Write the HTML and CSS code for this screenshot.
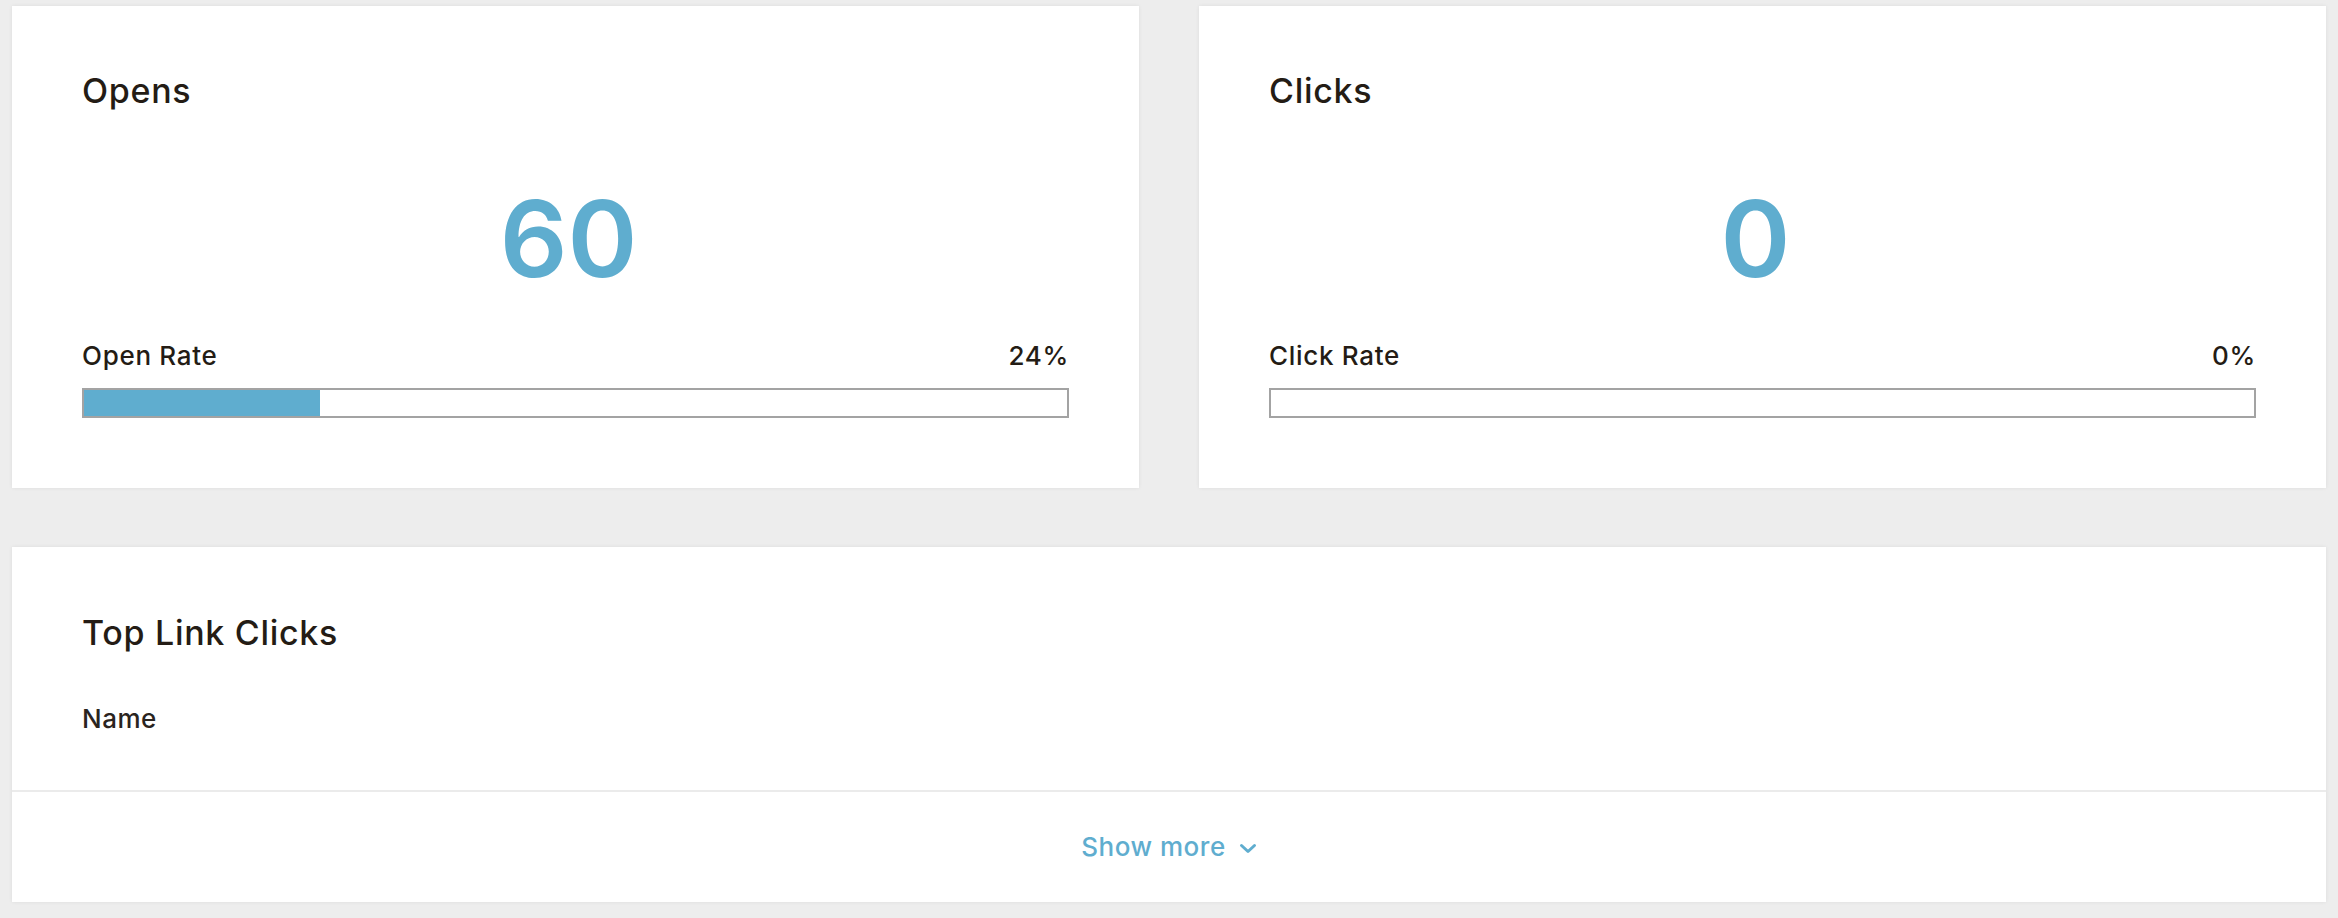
FILE: index.html
```html
<!DOCTYPE html>
<html lang="en">
<head>
<meta charset="utf-8">
<title>Report</title>
<link rel="stylesheet" href="styles.css">
</head>
<body>
<div class="page">
  <div class="stats-row">
    <section class="card stat-card">
      <h2 class="card-title">Opens</h2>
      <div class="big-number">60</div>
      <div class="rate-row">
        <span class="rate-label">Open Rate</span>
        <span class="rate-value">24%</span>
      </div>
      <div class="bar"><div class="bar-fill" style="width:24%"></div></div>
    </section>
    <section class="card stat-card">
      <h2 class="card-title">Clicks</h2>
      <div class="big-number">0</div>
      <div class="rate-row">
        <span class="rate-label">Click Rate</span>
        <span class="rate-value">0%</span>
      </div>
      <div class="bar"><div class="bar-fill" style="width:0%"></div></div>
    </section>
  </div>
  <section class="card links-card">
    <div class="links-body">
      <h2 class="card-title">Top Link Clicks</h2>
      <div class="col-head">Name</div>
    </div>
    <div class="links-footer">
      <a class="show-more" href="#">Show more
        <svg class="chev" width="18" height="11" viewBox="0 0 18 11"><path d="M2.5 2.5 L9 8.5 L15.5 2.5" fill="none" stroke="currentColor" stroke-width="3" stroke-linecap="round" stroke-linejoin="round"/></svg>
      </a>
    </div>
  </section>
</div>
</body>
</html>
```

FILE: styles.css
```css
html, body {
  margin: 0;
  padding: 0;
  background: #ededed;
}
body {
  font-family: Inter, "Open Sans", "Liberation Sans", Arial, sans-serif;
  color: #241c15;
}
.page {
  padding: 6px 12px 16px;
}
.stats-row {
  display: grid;
  grid-template-columns: 1fr 1fr;
  column-gap: 60px;
}
.card {
  background: #ffffff;
  box-shadow: 0 0 4px rgba(0, 0, 0, 0.07);
}
.stat-card {
  box-sizing: border-box;
  height: 482px;
  padding: 65px 70px 0;
  display: flex;
  flex-direction: column;
}
.card-title {
  margin: 0;
  font-size: 34px;
  line-height: 40px;
  font-weight: 500;
  letter-spacing: 0.7px;
}
.big-number {
  margin-top: 75px;
  text-align: center;
  font-size: 106px;
  line-height: 106px;
  font-weight: 600;
  color: #5fadcf;
  letter-spacing: 0;
  padding-right: 14px;
}
.rate-row {
  margin-top: 49px;
  display: flex;
  justify-content: space-between;
  font-size: 26px;
  line-height: 30px;
  font-weight: 500;
  letter-spacing: 0.7px;
}
.bar {
  margin-top: 17px;
  box-sizing: border-box;
  height: 30px;
  border: 2px solid #a3a3a3;
  background: #fff;
}
.bar-fill {
  height: 100%;
  background: #5fadcf;
}
.links-card {
  margin-top: 59px;
}
.links-body {
  padding: 66px 70px 56px;
  border-bottom: 2px solid #ebebeb;
}
.col-head {
  margin-top: 51px;
  font-size: 26px;
  line-height: 30px;
  font-weight: 500;
  letter-spacing: 0.5px;
  color: #2a2420;
}
.links-footer {
  height: 110px;
  display: flex;
  align-items: center;
  justify-content: center;
}
.show-more {
  display: inline-flex;
  align-items: center;
  gap: 13px;
  color: #5fadcf;
  text-decoration: none;
  font-size: 26px;
  line-height: 30px;
  font-weight: 500;
  letter-spacing: 0.5px;
}
.chev {
  display: block;
  margin-top: 2px;
}
```
